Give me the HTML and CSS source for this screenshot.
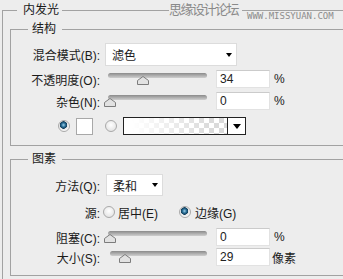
FILE: index.html
```html
<!DOCTYPE html>
<html lang="zh-CN">
<head>
    <meta charset="UTF-8">
    <title>内发光</title>
    <link rel="stylesheet" href="styles.css">
</head>
<body>
<div class="panel">
    <div class="mark-cn">思缘设计论坛</div>
    <div class="mark-en">WWW.MISSYUAN.COM</div>

    <div class="outer">
        <span class="title title-outer">内发光</span>

        <div class="group">
            <span class="title">结构</span>

            <div class="row row-select">
                <span class="lbl">混合模式(B):</span>
                <div class="select select-blend"><span>滤色</span><i class="arrow"></i></div>
            </div>

            <div class="row row-slider">
                <span class="lbl">不透明度(O):</span>
                <div class="slider">
                    <div class="track"></div>
                    <svg class="thumb" style="left: 33px" width="12" height="9" viewBox="0 0 12 9"><polygon points="0.5,8.5 0.5,4.5 6,0.5 11.5,4.5 11.5,8.5" fill="#e2e2e2" stroke="#7c7c7c"/></svg>
                </div>
                <div class="num">34</div>
                <span class="unit">%</span>
            </div>

            <div class="row row-slider">
                <span class="lbl">杂色(N):</span>
                <div class="slider">
                    <div class="track"></div>
                    <svg class="thumb" style="left: 0px" width="12" height="9" viewBox="0 0 12 9"><polygon points="0.5,8.5 0.5,4.5 6,0.5 11.5,4.5 11.5,8.5" fill="#e2e2e2" stroke="#7c7c7c"/></svg>
                </div>
                <div class="num">0</div>
                <span class="unit">%</span>
            </div>

            <div class="row row-color">
                <i class="radio checked"></i>
                <div class="swatch"></div>
                <i class="radio radio-grad"></i>
                <div class="grad">
                    <div class="grad-fill"></div>
                    <div class="grad-btn"><i class="arrow arrow-big"></i></div>
                </div>
            </div>
        </div>

        <div class="group">
            <span class="title">图素</span>

            <div class="row row-method">
                <span class="lbl">方法(Q):</span>
                <div class="select select-method"><span>柔和</span><i class="arrow"></i></div>
            </div>

            <div class="row row-source">
                <span class="lbl">源:</span>
                <i class="radio radio-center"></i>
                <span class="opt">居中(E)</span>
                <i class="radio checked radio-edge"></i>
                <span class="opt opt-edge">边缘(G)</span>
            </div>

            <div class="row row-slider">
                <span class="lbl">阻塞(C):</span>
                <div class="slider">
                    <div class="track"></div>
                    <svg class="thumb" style="left: 0px" width="12" height="9" viewBox="0 0 12 9"><polygon points="0.5,8.5 0.5,4.5 6,0.5 11.5,4.5 11.5,8.5" fill="#e2e2e2" stroke="#7c7c7c"/></svg>
                </div>
                <div class="num">0</div>
                <span class="unit">%</span>
            </div>

            <div class="row row-slider row-size">
                <span class="lbl">大小(S):</span>
                <div class="slider">
                    <div class="track track-size"></div>
                    <svg class="thumb" style="left: 15px" width="12" height="9" viewBox="0 0 12 9"><polygon points="0.5,8.5 0.5,4.5 6,0.5 11.5,4.5 11.5,8.5" fill="#e2e2e2" stroke="#7c7c7c"/></svg>
                </div>
                <div class="num">29</div>
                <span class="unit unit-px">像素</span>
            </div>
        </div>
    </div>
</div>
</body>
</html>
```

FILE: styles.css
```css
* {
    margin: 0;
    padding: 0;
    box-sizing: border-box;
}

body {
    background: #ededed;
    font-family: "Liberation Sans", "Noto Sans CJK SC", sans-serif;
    font-size: 12px;
    color: #1a1a1a;
}

.panel {
    width: 343px;
    height: 279px;
    overflow: hidden;
    position: relative;
}

/* watermark over the top border */
.mark-cn {
    position: absolute;
    left: 169px;
    top: 2px;
    z-index: 2;
    padding-right: 4px;
    line-height: 16px;
    font-size: 13px;
    letter-spacing: -1.5px;
    color: #8a8a8a;
    background: #ededed;
}

.mark-en {
    position: absolute;
    left: 247px;
    top: 12px;
    z-index: 2;
    font-family: "DejaVu Sans Mono", monospace;
    font-size: 9px;
    line-height: 9px;
    color: #8c8c8c;
}

.outer {
    position: relative;
    width: 400px;
    height: 300px;
    margin: 10px 0 0 2px;
    padding: 18px 0 0 7px;
    border-top: 1px solid #a2a2a2;
    border-left: 1px solid #a2a2a2;
}

.title {
    position: absolute;
    top: -9px;
    left: 17px;
    padding: 0 6px 0 4px;
    line-height: 16px;
    background: #ededed;
}

.title-outer {
    left: 14px;
    padding: 0 3px 0 6px;
}

.group {
    position: relative;
    width: 380px;
    height: 117px;
    margin-bottom: 13px;
    padding-top: 13px;
    border: 1px solid #a2a2a2;
}

.row {
    display: flex;
    align-items: center;
    height: 18px;
}

.lbl {
    width: 89px;
    text-align: right;
    white-space: nowrap;
}

/* drop-down boxes */
.row-select {
    height: 23px;
}

.row-method {
    height: 22px;
    margin-top: 1px;
}

.select {
    height: 100%;
    display: flex;
    align-items: center;
    justify-content: space-between;
    padding: 0 4px 0 6px;
    background: #fff;
    border: 1px solid #dcdcdc;
}

.select-blend {
    width: 132px;
    margin-left: 5px;
}

.select-method {
    width: 57px;
    margin-left: 6px;
}

.arrow {
    width: 0;
    height: 0;
    border-left: 3px solid transparent;
    border-right: 3px solid transparent;
    border-top: 4px solid #000;
}

.arrow-big {
    border-left-width: 4px;
    border-right-width: 4px;
    border-top-width: 5px;
}

/* sliders */
.row-slider {
    margin-top: 4px;
}

.slider {
    position: relative;
    width: 106px;
    height: 18px;
    margin-left: 4px;
}

.track {
    width: 99px;
    height: 5px;
    margin: 3px 0 0 4px;
    border-radius: 3px;
    background: linear-gradient(#8a8a8a, #b4b4b4 60%, #cfcfcf);
}

.track-size {
    width: 97px;
    margin-left: 6px;
}

.thumb {
    position: absolute;
    top: 6px;
}

.num {
    width: 54px;
    height: 18px;
    margin-left: 6px;
    padding-left: 3px;
    line-height: 16px;
    background: #fff;
    border: 1px solid #e2e2e2;
    border-top-color: #cbcbcb;
    color: #222;
}

.unit {
    margin-left: 4px;
}

.unit-px {
    margin-left: 2px;
}

.row-size {
    margin-top: 2px;
}

/* radios and colour row */
.radio {
    width: 12px;
    height: 12px;
    border-radius: 50%;
    border: 1px solid #a9a9a9;
    background: radial-gradient(circle at 50% 40%, #fff, #dcdcdc);
    flex-shrink: 0;
}

.radio.checked {
    background: radial-gradient(circle at 45% 40%, #9fd0ea 0, #2a6f97 2px, #123d5a 3.5px, #e6e6e6 4px, #fafafa 6px);
}

.row-color {
    margin-top: 7px;
    padding-left: 47px;
}

.swatch {
    width: 17px;
    height: 17px;
    margin-left: 6px;
    background: #fff;
    border: 1px solid #a8a8a8;
}

.radio-grad {
    margin-left: 12px;
}

.grad {
    display: flex;
    width: 123px;
    height: 18px;
    margin-left: 6px;
    border: 1px solid #222;
}

.grad-fill {
    flex: 1;
    background: linear-gradient(to right, #fff 8%, rgba(255, 255, 255, 0) 85%),
        repeating-conic-gradient(#dadada 0 25%, #fff 0 50%) 0 0 / 10px 10px;
}

.grad-btn {
    width: 18px;
    display: flex;
    align-items: center;
    justify-content: center;
    background: #fff;
    border-left: 1px solid #222;
}

.row-source {
    margin-top: 7px;
}

.row-source + .row-slider {
    margin-top: 7px;
}

.radio-center {
    margin-left: 3px;
}

.opt {
    margin-left: 3px;
}

.radio-edge {
    margin-left: 21px;
}

.opt-edge {
    margin-left: 4px;
}
```
